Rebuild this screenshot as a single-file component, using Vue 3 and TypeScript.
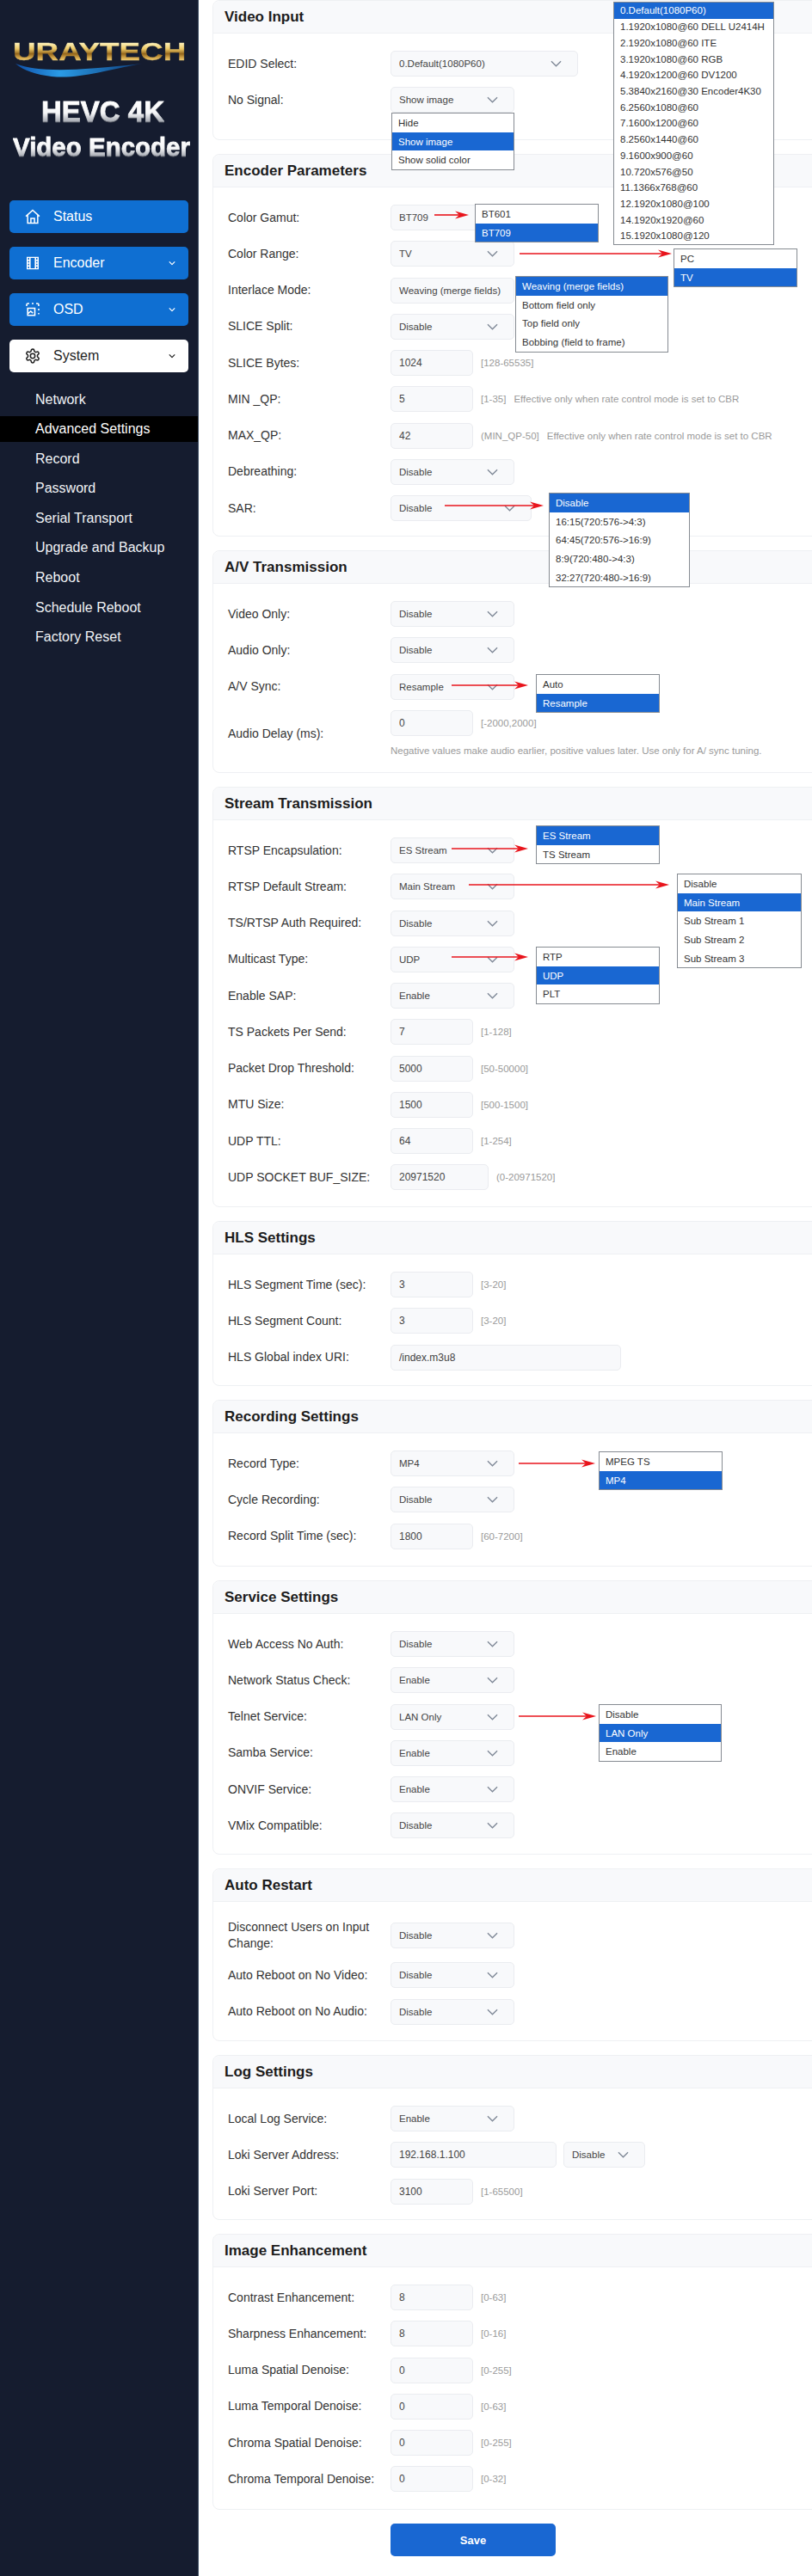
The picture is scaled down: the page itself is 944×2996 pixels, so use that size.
<script setup lang="ts">
type Row = {
  label: string;
  kind: "select" | "input";
  value: string;
  hint?: string;
  extra?: string;
  note?: string;
  width?: number;
  noChevron?: boolean;
  side?: string;
};

type Section = { title: string; pad: number; rows: Row[] };

const sel = (label: string, value: string, more: Partial<Row> = {}): Row => ({ label, kind: "select", value, ...more });
const inp = (label: string, value: string, hint?: string, more: Partial<Row> = {}): Row => ({
  label,
  kind: "input",
  value,
  hint,
  ...more,
});

const sections: Section[] = [
  {
    title: "Video Input",
    pad: 30.75,
    rows: [sel("EDID Select:", "0.Default(1080P60)", { width: 218 }), sel("No Signal:", "Show image")],
  },
  {
    title: "Encoder Parameters",
    pad: 17,
    rows: [
      sel("Color Gamut:", "BT709"),
      sel("Color Range:", "TV"),
      sel("Interlace Mode:", "Weaving (merge fields)", { noChevron: true }),
      sel("SLICE Split:", "Disable"),
      inp("SLICE Bytes:", "1024", "[128-65535]"),
      inp("MIN _QP:", "5", "[1-35]", { extra: "Effective only when rate control mode is set to CBR" }),
      inp("MAX_QP:", "42", "(MIN_QP-50]", { extra: "Effective only when rate control mode is set to CBR" }),
      sel("Debreathing:", "Disable"),
      sel("SAR:", "Disable", { width: 164 }),
    ],
  },
  {
    title: "A/V Transmission",
    pad: 16.25,
    rows: [
      sel("Video Only:", "Disable"),
      sel("Audio Only:", "Disable"),
      sel("A/V Sync:", "Resample"),
      inp("Audio Delay (ms):", "0", "[-2000,2000]", {
        note: "Negative values make audio earlier, positive values later. Use only for A/ sync tuning.",
      }),
    ],
  },
  {
    title: "Stream Transmission",
    pad: 18.75,
    rows: [
      sel("RTSP Encapsulation:", "ES Stream"),
      sel("RTSP Default Stream:", "Main Stream"),
      sel("TS/RTSP Auth Required:", "Disable"),
      sel("Multicast Type:", "UDP"),
      sel("Enable SAP:", "Enable"),
      inp("TS Packets Per Send:", "7", "[1-128]"),
      inp("Packet Drop Threshold:", "5000", "[50-50000]"),
      inp("MTU Size:", "1500", "[500-1500]"),
      inp("UDP TTL:", "64", "[1-254]"),
      inp("UDP SOCKET BUF_SIZE:", "20971520", "(0-20971520]", { width: 114 }),
    ],
  },
  {
    title: "HLS Settings",
    pad: 17.5,
    rows: [
      inp("HLS Segment Time (sec):", "3", "[3-20]"),
      inp("HLS Segment Count:", "3", "[3-20]"),
      inp("HLS Global index URI:", "/index.m3u8", undefined, { width: 268 }),
    ],
  },
  {
    title: "Recording Settings",
    pad: 19.5,
    rows: [
      sel("Record Type:", "MP4"),
      sel("Cycle Recording:", "Disable"),
      inp("Record Split Time (sec):", "1800", "[60-7200]"),
    ],
  },
  {
    title: "Service Settings",
    pad: 17.75,
    rows: [
      sel("Web Access No Auth:", "Disable"),
      sel("Network Status Check:", "Enable"),
      sel("Telnet Service:", "LAN Only"),
      sel("Samba Service:", "Enable"),
      sel("ONVIF Service:", "Enable"),
      sel("VMix Compatible:", "Disable"),
    ],
  },
  {
    title: "Auto Restart",
    pad: 18.5,
    rows: [
      sel("Disconnect Users on Input Change:", "Disable"),
      sel("Auto Reboot on No Video:", "Disable"),
      sel("Auto Reboot on No Audio:", "Disable"),
    ],
  },
  {
    title: "Log Settings",
    pad: 17.5,
    rows: [
      sel("Local Log Service:", "Enable"),
      inp("Loki Server Address:", "192.168.1.100", undefined, { width: 193, side: "Disable" }),
      inp("Loki Server Port:", "3100", "[1-65500]"),
    ],
  },
  {
    title: "Image Enhancement",
    pad: 19.75,
    rows: [
      inp("Contrast Enhancement:", "8", "[0-63]"),
      inp("Sharpness Enhancement:", "8", "[0-16]"),
      inp("Luma Spatial Denoise:", "0", "[0-255]"),
      inp("Luma Temporal Denoise:", "0", "[0-63]"),
      inp("Chroma Spatial Denoise:", "0", "[0-255]"),
      inp("Chroma Temporal Denoise:", "0", "[0-32]"),
    ],
  },
];

const subMenu = [
  "Network",
  "Advanced Settings",
  "Record",
  "Password",
  "Serial Transport",
  "Upgrade and Backup",
  "Reboot",
  "Schedule Reboot",
  "Factory Reset",
];

type Popup = { x: number; y: number; w: number; items: string[]; active: number; itemH?: number };

const popups: Popup[] = [
  {
    x: 713,
    y: 2,
    w: 187,
    itemH: 18.73,
    active: 0,
    items: [
      "0.Default(1080P60)",
      "1.1920x1080@60 DELL U2414H",
      "2.1920x1080@60 ITE",
      "3.1920x1080@60 RGB",
      "4.1920x1200@60 DV1200",
      "5.3840x2160@30 Encoder4K30",
      "6.2560x1080@60",
      "7.1600x1200@60",
      "8.2560x1440@60",
      "9.1600x900@60",
      "10.720x576@50",
      "11.1366x768@60",
      "12.1920x1080@100",
      "14.1920x1920@60",
      "15.1920x1080@120",
    ],
  },
  { x: 455, y: 131, w: 143, active: 1, items: ["Hide", "Show image", "Show solid color"] },
  { x: 552, y: 237, w: 144, active: 1, items: ["BT601", "BT709"] },
  { x: 783, y: 289, w: 144, active: 1, items: ["PC", "TV"] },
  {
    x: 599,
    y: 321,
    w: 178,
    active: 0,
    items: ["Weaving (merge fields)", "Bottom field only", "Top field only", "Bobbing (field to frame)"],
  },
  {
    x: 638,
    y: 573,
    w: 164,
    active: 0,
    items: ["Disable", "16:15(720:576->4:3)", "64:45(720:576->16:9)", "8:9(720:480->4:3)", "32:27(720:480->16:9)"],
  },
  { x: 623, y: 784, w: 144, active: 1, items: ["Auto", "Resample"] },
  { x: 623, y: 960, w: 144, active: 0, items: ["ES Stream", "TS Stream"] },
  { x: 787, y: 1016, w: 145, active: 1, items: ["Disable", "Main Stream", "Sub Stream 1", "Sub Stream 2", "Sub Stream 3"] },
  { x: 623, y: 1101, w: 144, active: 1, items: ["RTP", "UDP", "PLT"] },
  { x: 696, y: 1688, w: 144, active: 1, items: ["MPEG TS", "MP4"] },
  { x: 696, y: 1982, w: 143, active: 1, items: ["Disable", "LAN Only", "Enable"] },
];

// red arrows drawn on top of the shot: [from x, to x, y]
const arrows: [number, number, number][] = [
  [505, 545, 250],
  [604, 781, 295],
  [517, 632, 588],
  [525, 614, 797],
  [525, 614, 987],
  [545, 778, 1029],
  [525, 614, 1113],
  [603, 692, 1702],
  [603, 693, 1996],
];

const arrowHead = (x: number, y: number) => `${x},${y} ${x - 16},${y - 4.5} ${x - 11},${y} ${x - 16},${y + 4.5}`;
</script>

<template>
  <div class="page">
    <aside class="sidebar">
      <div class="brand">
        <div class="logo-text">URAYTECH</div>
        <svg class="swoosh" width="206" height="18" viewBox="0 0 206 18">
          <defs>
            <linearGradient id="swooshFill" x1="0" y1="0" x2="1" y2="0">
              <stop offset="0" stop-color="#0f4fa8" />
              <stop offset="0.35" stop-color="#2a9be6" />
              <stop offset="1" stop-color="#0d3d7c" />
            </linearGradient>
          </defs>
          <path d="M3 1C30 11 70 10 150 1 105 9 78 19 45 16 28 14 12 9 3 1Z" fill="url(#swooshFill)" />
        </svg>
        <div class="product line-one">HEVC 4K</div>
        <div class="product line-two">Video Encoder</div>
      </div>

      <nav class="nav">
        <div class="nav-btn">
          <svg class="nav-icon" viewBox="0 0 24 24" width="20" height="20">
            <path d="M2.5 11.5 12 3l9.5 8.5M5 9.5V21h14V9.5M9.5 21v-6.5h5V21" />
          </svg>
          <span>Status</span>
        </div>
        <div class="nav-btn">
          <svg class="nav-icon" viewBox="0 0 14 15" width="14" height="15">
            <path d="M.7.7h12.6v13.6H.7zM3.8.7v13.6M10.2.7v13.6M.7 4.2h3.1M.7 7.5h3.1M.7 10.8h3.1M10.2 4.2h3.1M10.2 7.5h3.1M10.2 10.8h3.1" />
          </svg>
          <span>Encoder</span>
          <svg class="nav-chevron" viewBox="0 0 10 6" width="8" height="5"><path d="M1 1l4 4 4-4" /></svg>
        </div>
        <div class="nav-btn">
          <svg class="nav-icon" viewBox="0 0 16 16" width="16" height="16">
            <path d="M1 4V2.5A1.5 1.5 0 0 1 2.5 1H4M7 1h2M12 1h1.5A1.5 1.5 0 0 1 15 2.5V4M15 7v2M15 12v1.5M1 6.5h0" />
            <path d="M2.2 6.5h8.3v8.3H2.2zM2.2 13l3.5-3 2.5 2.2M8.5 9h0" />
          </svg>
          <span>OSD</span>
          <svg class="nav-chevron" viewBox="0 0 10 6" width="8" height="5"><path d="M1 1l4 4 4-4" /></svg>
        </div>
        <div class="nav-btn current">
          <svg class="nav-icon" viewBox="0 0 24 24" width="19" height="19">
            <path
              d="M12.22 2h-.44a2 2 0 0 0-2 2v.18a2 2 0 0 1-1 1.73l-.43.25a2 2 0 0 1-2 0l-.15-.08a2 2 0 0 0-2.73.73l-.22.38a2 2 0 0 0 .73 2.73l.15.1a2 2 0 0 1 1 1.72v.51a2 2 0 0 1-1 1.74l-.15.09a2 2 0 0 0-.73 2.73l.22.38a2 2 0 0 0 2.73.73l.15-.08a2 2 0 0 1 2 0l.43.25a2 2 0 0 1 1 1.73V20a2 2 0 0 0 2 2h.44a2 2 0 0 0 2-2v-.18a2 2 0 0 1 1-1.73l.43-.25a2 2 0 0 1 2 0l.15.08a2 2 0 0 0 2.73-.73l.22-.39a2 2 0 0 0-.73-2.73l-.15-.08a2 2 0 0 1-1-1.74v-.5a2 2 0 0 1 1-1.74l.15-.09a2 2 0 0 0 .73-2.73l-.22-.38a2 2 0 0 0-2.73-.73l-.15.08a2 2 0 0 1-2 0l-.43-.25a2 2 0 0 1-1-1.73V4a2 2 0 0 0-2-2z"
            />
            <circle cx="12" cy="12" r="3.4" />
          </svg>
          <span>System</span>
          <svg class="nav-chevron" viewBox="0 0 10 6" width="8" height="5"><path d="M1 1l4 4 4-4" /></svg>
        </div>
      </nav>

      <ul class="sub-menu">
        <li v-for="item in subMenu" :key="item" :class="{ on: item === 'Advanced Settings' }">{{ item }}</li>
      </ul>
    </aside>

    <main class="content">
      <section v-for="s in sections" :key="s.title" class="card">
        <h2>{{ s.title }}</h2>
        <div class="card-body" :style="{ paddingBottom: s.pad + 'px' }">
          <div v-for="r in s.rows" :key="r.label" class="row" :class="{ 'with-note': r.note }">
            <label>{{ r.label }}</label>
            <div class="control">
              <div class="control-line">
                <div
                  class="field"
                  :class="r.kind"
                  :style="r.width ? { width: r.width + 'px' } : undefined"
                >
                  <span>{{ r.value }}</span>
                  <svg v-if="r.kind === 'select' && !r.noChevron" class="chevron" viewBox="0 0 14 8" width="13" height="8">
                    <path d="M1 1l6 6 6-6" />
                  </svg>
                </div>
                <div v-if="r.side" class="field select side">
                  <span>{{ r.side }}</span>
                  <svg class="chevron" viewBox="0 0 14 8" width="13" height="8"><path d="M1 1l6 6 6-6" /></svg>
                </div>
                <span v-if="r.hint" class="hint">{{ r.hint }}</span>
                <span v-if="r.extra" class="hint extra">{{ r.extra }}</span>
              </div>
              <p v-if="r.note" class="note">{{ r.note }}</p>
            </div>
          </div>
        </div>
      </section>
      <button type="button" class="save">Save</button>
    </main>

    <div
      v-for="p in popups"
      :key="p.x + '-' + p.y"
      class="popup"
      :style="{ left: p.x + 'px', top: p.y + 'px', width: p.w + 'px' }"
    >
      <div
        v-for="(item, i) in p.items"
        :key="item"
        class="popup-item"
        :class="{ active: i === p.active }"
        :style="{ height: (p.itemH ?? 21.7) + 'px' }"
      >
        {{ item }}
      </div>
    </div>

    <svg class="arrows" width="944" height="2996" viewBox="0 0 944 2996">
      <g v-for="a in arrows" :key="a[2]">
        <line :x1="a[0]" :y1="a[2]" :x2="a[1] - 10" :y2="a[2]" />
        <polygon :points="arrowHead(a[1], a[2])" />
      </g>
    </svg>
  </div>
</template>

<style scoped>
.page {
  position: relative;
  display: flex;
  width: 944px;
  height: 2996px;
  overflow: hidden;
  color: #333;
  background: #fff;
  font-family: "Liberation Sans", Arial, sans-serif;
}

.sidebar {
  flex: none;
  box-sizing: border-box;
  width: 231px;
  padding-top: 47px;
  background: #151c2f;
  border-right: 1px solid #3d4d62;
}

.brand {
  height: 186px;
  padding-left: 15px;
}

.logo-text {
  width: 164px;
  height: 26px;
  font-size: 29px;
  font-weight: 700;
  line-height: 26px;
  white-space: nowrap;
  transform: scaleX(1.27);
  transform-origin: left center;
  background: linear-gradient(180deg, #fff2b8 12%, #ecc866 38%, #94661c 60%, #dcb052 80%, #fbe69c 100%);
  -webkit-background-clip: text;
  background-clip: text;
  color: transparent;
  -webkit-text-stroke: 0.4px transparent;
}

.swoosh {
  display: block;
}

.product {
  width: fit-content;
  font-weight: 700;
  white-space: nowrap;
  background: linear-gradient(180deg, #ffffff 20%, #f4f5f7 55%, #a9adb5 82%, #e4e6ea 100%);
  -webkit-background-clip: text;
  background-clip: text;
  color: transparent;
  -webkit-text-stroke: 0.8px transparent;
  filter: drop-shadow(0 1px 0 #5c606a);
}

.line-one {
  margin: 22px 0 0 33px;
  font-size: 33px;
  line-height: 34px;
}

.line-two {
  margin-top: 8px;
  font-size: 29.5px;
  line-height: 32px;
}

.nav {
  display: flex;
  flex-direction: column;
  gap: 16px;
  padding: 0 11px;
}

.nav-btn {
  position: relative;
  display: flex;
  align-items: center;
  box-sizing: border-box;
  width: 208px;
  height: 38px;
  color: #fff;
  background: #0f6fd2;
  border-radius: 5px;
  font-size: 16px;
}

.nav-btn > span {
  position: absolute;
  left: 51px;
}

.nav-btn.current {
  color: #222;
  background: #fff;
}

.nav-icon {
  position: absolute;
  left: 27px;
  top: 50%;
  transform: translate(-50%, -50%);
  fill: none;
  stroke: currentColor;
  stroke-width: 1.6;
}

.nav-btn:first-child .nav-icon {
  stroke-width: 1.8;
}

.nav-btn.current .nav-icon {
  stroke-width: 2;
}

.nav-chevron {
  position: absolute;
  right: 15px;
  top: 50%;
  transform: translateY(-50%);
  fill: none;
  stroke: currentColor;
  stroke-width: 1.5;
}

.sub-menu {
  margin: 0;
  padding: 16.5px 0 0;
  list-style: none;
}

.sub-menu li {
  height: 30px;
  margin-bottom: 4.6px;
  padding-left: 41px;
  color: #f1f3f6;
  font-size: 16px;
  line-height: 30px;
}

.sub-menu li.on {
  color: #fff;
  background: #000;
}

.content {
  flex: none;
  width: 730px;
  padding-left: 16px;
}

.card {
  box-sizing: border-box;
  width: 714px;
  margin-bottom: 16px;
  background: #fff;
  border: 1px solid #eef0f3;
  border-radius: 8px;
}

.card h2 {
  box-sizing: border-box;
  height: 38px;
  margin: 0;
  padding: 0 13px;
  color: #1c1c1c;
  background: #f8f9fb;
  border-bottom: 1px solid #eef0f3;
  border-radius: 8px 8px 0 0;
  font-size: 17px;
  font-weight: 700;
  line-height: 37px;
}

.card-body {
  display: flex;
  flex-direction: column;
  gap: 12.25px;
  padding: 20px 0 20px 17px;
}

.row {
  display: grid;
  grid-template-columns: 189px 1fr;
  align-items: center;
}

.row label {
  padding-right: 8px;
  color: #333;
  font-size: 14px;
  line-height: 19px;
}

.control-line {
  display: flex;
  align-items: center;
  gap: 9px;
}

.field {
  position: relative;
  display: flex;
  flex: none;
  align-items: center;
  box-sizing: border-box;
  height: 30px;
  padding-left: 9px;
  color: #444;
  background: #f8f9fb;
  border: 1px solid #eaecf0;
  border-radius: 5px;
  font-size: 11.5px;
  white-space: nowrap;
}

.field.select {
  width: 144px;
}

.field.input {
  width: 96px;
  font-size: 12px;
}

.field.side {
  width: 95px;
  margin-left: -1px;
}

.chevron {
  position: absolute;
  right: 18px;
  top: 50%;
  transform: translateY(-50%);
  fill: none;
  stroke: #7e8796;
  stroke-width: 1.4;
}

.hint {
  color: #9a9a9a;
  font-size: 11.5px;
  white-space: nowrap;
}

.note {
  margin: 8px 0 0;
  color: #9a9a9a;
  font-size: 11.5px;
  line-height: 18px;
  white-space: nowrap;
}

.save {
  display: block;
  width: 192px;
  height: 38px;
  margin: 1px 0 0 207px;
  color: #fff;
  background: #1967d2;
  border: 0;
  border-radius: 5px;
  font: 700 13px "Liberation Sans", Arial, sans-serif;
}

.popup {
  position: absolute;
  z-index: 2;
  box-sizing: border-box;
  background: #fff;
  border: 1px solid #868b92;
}

.popup-item {
  display: flex;
  align-items: center;
  padding-left: 7px;
  color: #333;
  font-size: 11.5px;
  white-space: nowrap;
  overflow: hidden;
}

.popup-item.active {
  color: #fff;
  background: #1967d2;
}

.arrows {
  position: absolute;
  left: 0;
  top: 0;
  z-index: 3;
  pointer-events: none;
}

.arrows line {
  stroke: #e8141c;
  stroke-width: 1.6;
}

.arrows polygon {
  fill: #e8141c;
}
</style>
